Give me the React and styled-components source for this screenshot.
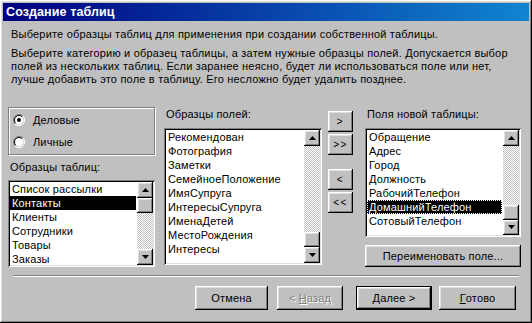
import React from 'react';
import styled, { createGlobalStyle, css } from 'styled-components';

const GlobalStyle = createGlobalStyle`
  html, body { margin: 0; padding: 0; background: #c0c0c0; }
  body { font-family: "Liberation Sans", Arial, sans-serif; font-size: 11px; color: #000; letter-spacing: 0.15px; }
  * { box-sizing: border-box; }
`;

const raised = css`
  box-shadow: inset -1px -1px #000, inset 1px 1px #fff, inset -2px -2px #808080, inset 2px 2px #dfdfdf;
`;

const sunken = css`
  box-shadow: inset 1px 1px #808080, inset -1px -1px #fff, inset 2px 2px #000, inset -2px -2px #dfdfdf;
`;

const Window = styled.div`
  width: 532px;
  height: 323px;
  padding: 3px;
  background: #c0c0c0;
  ${raised};
  display: flex;
  flex-direction: column;
`;

const TitleBar = styled.div`
  height: 18px;
  padding-left: 3px;
  display: flex;
  align-items: center;
  background: linear-gradient(to right, #000080, #1084d0);
  color: #fff;
  font-weight: bold;
  font-size: 12.5px;
  letter-spacing: 0.1px;
`;

const Body = styled.div`
  padding: 0 8px 0 5px;
  display: flex;
  flex-direction: column;
`;

const Intro = styled.div`
  padding-left: 3px;
  margin-top: 7px;
  line-height: 13px;
  letter-spacing: 0.2px;
`;

const Para = styled.p`
  margin: 0 0 ${p => p.gap || 0}px 0;
  padding-left: ${p => p.indent || 0}px;
`;

const MainRow = styled.div`
  margin-top: 21px;
  display: flex;
  align-items: flex-start;
`;

const Column = styled.div`
  display: flex;
  flex-direction: column;
  width: ${p => p.width}px;
  margin-left: ${p => p.left || 0}px;
`;

const GroupBox = styled.div`
  height: 48px;
  padding: 1px 0;
  border: 1px solid #808080;
  box-shadow: inset 1px 1px #fff, 1px 1px #fff;
  display: flex;
  flex-direction: column;
`;

const RadioRow = styled.label`
  height: 22px;
  display: flex;
  align-items: center;
  padding-left: 4px;
  gap: 8px;
  line-height: 13px;
`;

const Label = styled.div`
  line-height: 13px;
  height: 13px;
  padding-left: ${p => p.indent || 2}px;
  margin: ${p => p.mt || 0}px 0 ${p => p.mb || 0}px 0;
`;

const ListBox = styled.div`
  height: ${p => p.height}px;
  background: #fff;
  padding: 2px;
  ${sunken};
  display: flex;
`;

const Items = styled.div`
  flex: 1;
  overflow: hidden;
  padding-right: 1px;
`;

const Item = styled.div`
  height: 14px;
  line-height: 14px;
  padding-left: 2px;
  white-space: nowrap;
  background: ${p => (p.selected ? '#000' : 'transparent')};
  color: ${p => (p.selected ? '#fff' : '#000')};
  outline: ${p => (p.focus ? '1px dotted #fff' : 'none')};
  outline-offset: -1px;
`;

const ScrollBar = styled.div`
  width: 16px;
  display: flex;
  flex-direction: column;
`;

const Track = styled.div`
  flex: 1;
  background-color: #fff;
  background-image: conic-gradient(#c0c0c0 25%, #fff 0 50%, #c0c0c0 0 75%, #fff 0);
  background-size: 2px 2px;
  display: flex;
  flex-direction: column;
`;

const Thumb = styled.div`
  height: 15px;
  margin-top: ${p => p.offset}px;
  background: #c0c0c0;
  ${raised};
`;

const ArrowBtn = styled.div`
  width: 16px;
  height: 16px;
  background: #c0c0c0;
  ${raised};
  display: flex;
  align-items: center;
  justify-content: center;
`;

const MoveButtons = styled.div`
  width: 25px;
  margin-left: 6px;
  margin-top: 4px;
  display: flex;
  flex-direction: column;
`;

const Button = styled.div`
  width: ${p => p.width || 75}px;
  height: ${p => p.height || 23}px;
  margin-top: ${p => p.mt || 0}px;
  margin-left: ${p => p.ml || 0}px;
  background: #c0c0c0;
  ${raised};
  ${p => p.isDefault && css`
    box-shadow: inset 0 0 0 1px #000, inset -2px -2px #000, inset 2px 2px #fff, inset -3px -3px #808080, inset 3px 3px #dfdfdf;
  `}
  display: flex;
  align-items: center;
  justify-content: center;
  font-size: ${p => (p.small ? '10px' : '11px')};
  letter-spacing: ${p => (p.small ? '1.5px' : '0.15px')};
  color: ${p => (p.disabled ? '#808080' : '#000')};
  text-shadow: ${p => (p.disabled ? '1px 1px #fff' : 'none')};
  white-space: pre;
`;

const Separator = styled.div`
  height: 2px;
  margin: 8px 2px 0 5px;
  border-top: 1px solid #808080;
  border-bottom: 1px solid #fff;
`;

const ButtonRow = styled.div`
  margin-top: 9px;
  padding-left: 187px;
  display: flex;
`;

const Radio = ({ checked }) => (
  <svg width="12" height="12" viewBox="0 0 12 12">
    <circle cx="6" cy="6" r="4.5" fill="#fff" />
    <path d="M10 2 A5.5 5.5 0 0 0 2 10" fill="none" stroke="#808080" />
    <path d="M9.2 2.8 A4.5 4.5 0 0 0 2.8 9.2" fill="none" stroke="#000" />
    <path d="M10 2 A5.5 5.5 0 0 1 2 10" fill="none" stroke="#fff" />
    <path d="M9.2 2.8 A4.5 4.5 0 0 1 2.8 9.2" fill="none" stroke="#dfdfdf" />
    {checked && <circle cx="6" cy="6" r="2" fill="#000" />}
  </svg>
);

const Arrow = ({ down }) => (
  <svg width="7" height="4" viewBox="0 0 7 4">
    <path d={down ? 'M0 0 H7 L3.5 4 Z' : 'M0 4 H7 L3.5 0 Z'} fill="#000" />
  </svg>
);

const List = ({ height, items, selected, focus, thumbTop }) => (
  <ListBox height={height}>
    <Items>
      {items.map((it, i) => (
        <Item key={it} selected={i === selected} focus={focus && i === selected}>{it}</Item>
      ))}
    </Items>
    <ScrollBar>
      <ArrowBtn><Arrow /></ArrowBtn>
      <Track>
        <Thumb offset={thumbTop} />
      </Track>
      <ArrowBtn><Arrow down /></ArrowBtn>
    </ScrollBar>
  </ListBox>
);

const tables = ['Список рассылки', 'Контакты', 'Клиенты', 'Сотрудники', 'Товары', 'Заказы'];
const sampleFields = ['Рекомендован', 'Фотография', 'Заметки', 'СемейноеПоложение', 'ИмяСупруга', 'ИнтересыСупруга', 'ИменаДетей', 'МестоРождения', 'Интересы'];
const newFields = ['Обращение', 'Адрес', 'Город', 'Должность', 'РабочийТелефон', 'ДомашнийТелефон', 'СотовыйТелефон'];

export default function App() {
  return (
    <>
      <GlobalStyle />
      <Window>
        <TitleBar>Создание таблиц</TitleBar>
        <Body>
          <Intro>
            <Para gap={6}>Выберите образцы таблиц для применения при создании собственной таблицы.</Para>
            <Para>
              Выберите категорию и образец таблицы, а затем нужные образцы полей. Допускается выбор<br />
              полей из нескольких таблиц. Если заранее неясно, будет ли использоваться поле или нет,<br />
              лучше добавить это поле в таблицу. Его несложно будет удалить позднее.
            </Para>
          </Intro>

          <MainRow>
            <Column width={147}>
              <GroupBox>
                <RadioRow><Radio checked />Деловые</RadioRow>
                <RadioRow><Radio />Личные</RadioRow>
              </GroupBox>
              <Label mt={6} mb={6}>Образцы таблиц:</Label>
              <List height={87} items={tables} selected={1} thumbTop={0} />
            </Column>

            <Column width={158} left={9}>
              <Label indent={2} mt={1} mb={7}>Образцы полей:</Label>
              <List height={137} items={sampleFields} selected={-1} thumbTop={86} />
            </Column>

            <MoveButtons>
              <Button width={25} height={21} small>&gt;</Button>
              <Button width={25} height={21} mt={2} small>&gt;&gt;</Button>
              <Button width={25} height={21} mt={14} small>&lt;</Button>
              <Button width={25} height={21} mt={2} small>&lt;&lt;</Button>
            </MoveButtons>

            <Column width={156} left={12}>
              <Label indent={2} mt={1} mb={7}>Поля новой таблицы:</Label>
              <List height={109} items={newFields} selected={5} focus thumbTop={59} />
              <Button width={156} height={22} mt={8}>Переименовать поле...</Button>
            </Column>
          </MainRow>

          <Separator />

          <ButtonRow>
            <Button width={73} height={24}>Отмена</Button>
            <Button width={66} height={24} ml={9} disabled>&lt; <u>Н</u>азад</Button>
            <Button width={76} height={24} ml={13} isDefault><u>Д</u>алее &gt;</Button>
            <Button width={77} height={24} ml={7}><u>Г</u>отово</Button>
          </ButtonRow>
        </Body>
      </Window>
    </>
  );
}
